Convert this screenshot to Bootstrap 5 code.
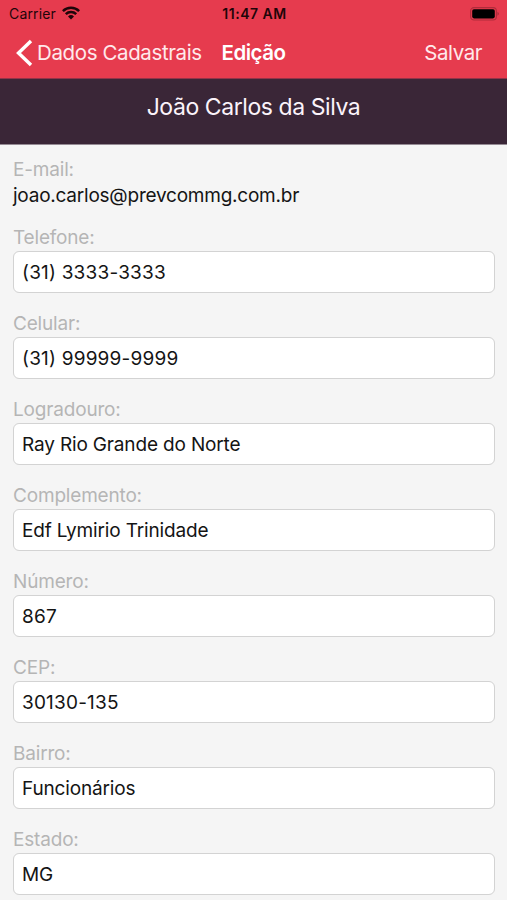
<!DOCTYPE html>
<html lang="pt-BR">
<head>
<meta charset="utf-8">
<meta name="viewport" content="width=device-width, initial-scale=1">
<title>Edição</title>
<link href="https://cdn.jsdelivr.net/npm/bootstrap@5.3.0/dist/css/bootstrap.min.css" rel="stylesheet">
<style>
body{font-family:Inter,"Liberation Sans",sans-serif;background:#f5f5f5;color:#141414;height:900px;overflow:hidden}
.top-area{background:#e63b4e;height:79px;border-bottom:1px solid #923348}
.status-row{height:27px;font-size:14px;letter-spacing:.15px;color:#1e0509;display:grid;grid-template-columns:1fr auto 1fr;padding:0 7px 0 9px}
.status-time{font-size:14px;font-weight:600;letter-spacing:.5px}
.wifi{margin-left:6px;margin-top:-1px}
.title-row{height:51px;font-size:20.5px;color:#fff;display:grid;grid-template-columns:1fr auto 1fr;padding:0 15px}
.title-row a{color:#ffe9eb}
.title-row span,.save-link{padding-top:1px}
.back-link{letter-spacing:-.38px}
.save-link{letter-spacing:-.45px;margin-right:10px}
.page-title{font-weight:600;letter-spacing:-.5px}
.person{background:#3a2637;height:66px;color:#fbf3fa;font-size:23px;letter-spacing:-.43px;line-height:27px;padding-top:15px;border-bottom:1px solid #958b94}
.fields{padding:12px 12px 0 13px}
.field{margin-bottom:18px}
.field .form-label{display:block;font-size:19px;line-height:26px;color:#b5b5b5;letter-spacing:-.18px}
.mail{font-size:19px;line-height:26px;letter-spacing:-.23px;margin-bottom:16px}
.field .form-control{height:42px;border:1px solid #d3d3d3;border-radius:6px;padding:0 8px;font-size:19px;color:#141414;letter-spacing:-.16px}
.field .form-control.numeric{letter-spacing:.2px}
</style>
<script src="https://cdn.jsdelivr.net/npm/bootstrap@5.3.0/dist/js/bootstrap.bundle.min.js"></script>
</head>
<body>
<header class="top-area">
  <div class="status-row align-items-center">
    <div class="d-flex align-items-center"><span>Carrier</span>
      <svg class="wifi" width="18" height="14" viewBox="0 0 18 14" fill="none" stroke="#1e0509" stroke-width="2.5"><path d="M.9 5.1a11.5 11.5 0 0 1 16.2 0M3.8 8.1a7.4 7.4 0 0 1 10.4 0"/><path d="M9 13.6 6 10.5a4.3 4.3 0 0 1 6 0z" fill="#1e0509" stroke="none"/></svg>
    </div>
    <div class="status-time">11:47 AM</div>
    <svg class="ms-auto" width="30" height="14" viewBox="0 0 30 14"><rect x=".6" y=".6" width="25.8" height="12.4" rx="3.4" fill="none" stroke="#b02c3b" stroke-width="1.1"/><rect x="2.2" y="2.2" width="22.6" height="9.2" rx="1.8" fill="#000"/><path d="M27.6 4.8q2 2 0 4z" fill="#8b2632"/></svg>
  </div>
  <nav class="title-row align-items-center">
    <a href="#" class="back-link d-flex align-items-center text-decoration-none text-nowrap">
      <svg class="me-1 flex-shrink-0" width="18" height="28" viewBox="0 0 18 28" fill="none" stroke="#fff" stroke-width="3.4"><path d="M16 2 3.5 14 16 26"/></svg><span>Dados Cadastrais</span></a>
    <span class="page-title">Edição</span>
    <a href="#" class="save-link ms-auto text-decoration-none">Salvar</a>
  </nav>
</header>
<div class="person text-center">João Carlos da Silva</div>
<form class="fields">
  <div class="field mb-0"><span class="form-label mb-0">E-mail:</span><div class="mail">joao.carlos@prevcommg.com.br</div></div>
  <div class="field"><label class="form-label mb-0" for="tel">Telefone:</label><input class="form-control numeric" id="tel" value="(31) 3333-3333"></div>
  <div class="field"><label class="form-label mb-0" for="cel">Celular:</label><input class="form-control numeric" id="cel" value="(31) 99999-9999"></div>
  <div class="field"><label class="form-label mb-0" for="log">Logradouro:</label><input class="form-control" id="log" value="Ray Rio Grande do Norte"></div>
  <div class="field"><label class="form-label mb-0" for="com">Complemento:</label><input class="form-control" id="com" value="Edf Lymirio Trinidade"></div>
  <div class="field"><label class="form-label mb-0" for="num">Número:</label><input class="form-control numeric" id="num" value="867"></div>
  <div class="field"><label class="form-label mb-0" for="cep">CEP:</label><input class="form-control numeric" id="cep" value="30130-135"></div>
  <div class="field"><label class="form-label mb-0" for="bai">Bairro:</label><input class="form-control" id="bai" value="Funcionários"></div>
  <div class="field"><label class="form-label mb-0" for="est">Estado:</label><input class="form-control" id="est" value="MG"></div>
</form>
</body>
</html>
